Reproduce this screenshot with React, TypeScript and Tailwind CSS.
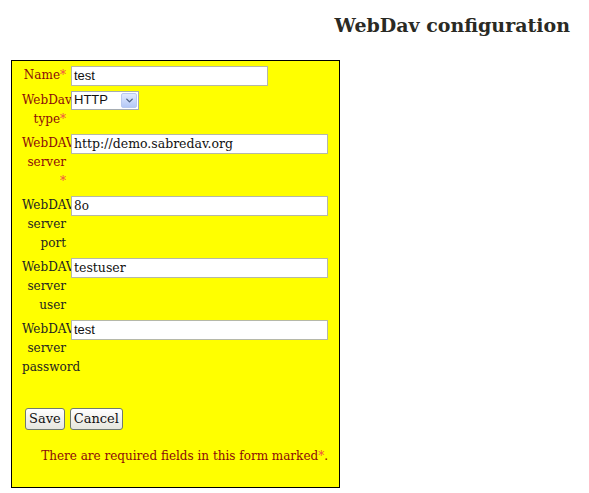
import { ChevronDown } from "lucide-react"

const serif = "font-['DejaVu_Serif',serif]"

type Row = {
    label: string[]
    required?: boolean
    value: string
    wide?: boolean
    inputFont: string
}

const rows: Row[] = [
    { label: ["Name"], required: true, value: "test", inputFont: "font-['Liberation_Sans',sans-serif] text-[13px]" },
    { label: ["WebDAV", "server"], required: true, value: "http://demo.sabredav.org", wide: true, inputFont: `${serif} text-[12.5px]` },
    { label: ["WebDAV", "server", "port"], value: "8o", wide: true, inputFont: `${serif} text-[12px]` },
    { label: ["WebDAV", "server", "user"], value: "testuser", wide: true, inputFont: `${serif} text-[12.5px]` },
    { label: ["WebDAV", "server", "password"], value: "test", wide: true, inputFont: "font-['Liberation_Sans',sans-serif] text-[13px]" },
]

const Star = () => <span className="text-[#f04a4a]">*</span>

const Label = ({ lines, required }: { lines: string[], required?: boolean }) => {
    const color = required ? "text-[#8b0a0a]" : "text-[#222]"
    // server row puts the star on its own line
    const ownLine = required && lines.length > 1 && lines[0] === "WebDAV"
    return (
        <div className={`w-[44px] text-right leading-[19px] ${color}`}>
            {lines.map((l, i) => (
                <div key={i} className="whitespace-nowrap">
                    {l}
                    {required && !ownLine && i === lines.length - 1 && <Star />}
                </div>
            ))}
            {ownLine && <div><Star /></div>}
        </div>
    )
}

const TextInput = ({ value, wide, font }: { value: string, wide?: boolean, font: string }) => (
    <div className={`relative h-[20px] ${wide ? "w-[257px]" : "w-[197px]"} border border-[#b5b8a8] bg-white pl-[2px] leading-[18px] text-[#111] ${font}`}>
        {value}
    </div>
)

export default function App() {
    return (
        <div className={`min-h-screen bg-white ${serif} text-[12px]`}>
            <div className="flex justify-end pr-[19px] pt-[11px]">
                <h1 className="text-[19px] font-bold text-[#2a2a24]">WebDav configuration</h1>
            </div>

            <div className="ml-[11px] mt-[20px] h-[428px] w-[329px] border border-black bg-[#ffff00] pl-[10px] pr-[11px] pt-[5px]">
                <div className="flex flex-col gap-[5px]">
                    <div className="flex gap-[5px]">
                        <Label lines={rows[0].label} required />
                        <TextInput value={rows[0].value} font={rows[0].inputFont} />
                    </div>

                    <div className="flex gap-[5px]">
                        <Label lines={["WebDav", "type"]} required />
                        <div className="relative flex h-[19px] w-[68px] items-center border border-[#a5acb2] bg-white font-['Liberation_Sans',sans-serif] text-[13px] text-[#111]">
                            <span className="flex-1 pl-[2px]">HTTP</span>
                            <span className="mr-[1px] flex h-[15px] w-[16px] items-center justify-center rounded-[2px] border border-[#b9c9ef] bg-linear-to-b from-[#e1eafe] to-[#b4c8f6]">
                                <ChevronDown size={11} strokeWidth={3} className="text-[#4d6185]" />
                            </span>
                        </div>
                    </div>

                    {rows.slice(1).map((r, i) => (
                        <div key={i} className="flex gap-[5px]">
                            <Label lines={r.label} required={r.required} />
                            <TextInput value={r.value} wide font={r.inputFont} />
                        </div>
                    ))}
                </div>

                <div className="mt-[31px] flex gap-[5px] pl-[3px]">
                    <button className="h-[22px] rounded-[3px] border border-[#707a70] bg-linear-to-b from-white to-[#e6e6de] px-[3px] text-[13px] leading-[18px] text-[#111]">Save</button>
                    <button className="h-[22px] rounded-[3px] border border-[#707a70] bg-linear-to-b from-white to-[#e6e6de] px-[3px] text-[13px] leading-[18px] text-[#111]">Cancel</button>
                </div>

                <p className="mt-[17px] text-right text-[#8b0a0a]">
                    There are required fields in this form marked<Star />.
                </p>
            </div>
        </div>
    )
}
